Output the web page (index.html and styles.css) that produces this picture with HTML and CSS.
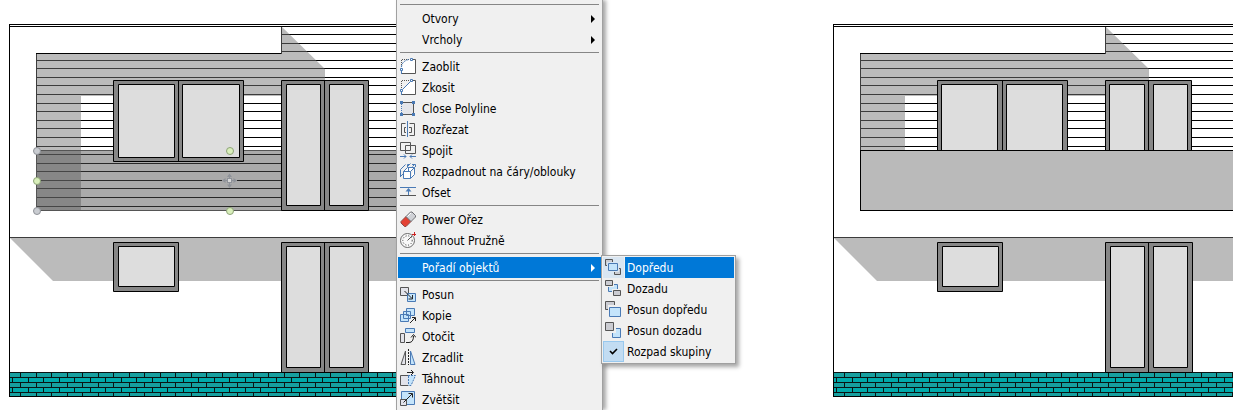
FILE: index.html
```html
<!DOCTYPE html>
<html lang="cs">
<head>
<meta charset="utf-8">
<title>Pořadí objektů</title>
<link rel="stylesheet" href="styles.css">
</head>
<body>
<svg class="defs" aria-hidden="true">
  <defs>
    <pattern id="bricks" x="20" y="372" width="31" height="10" patternUnits="userSpaceOnUse">
      <rect width="31" height="5" fill="#17a0a0"/>
      <rect y="5" width="31" height="5" fill="#00aaaa"/>
      <path d="M0 .5H31M0 5.5H31M.5 0V5M16.5 0V5M8.5 5V10M23.5 5V10" stroke="#0a1414" fill="none"/>
    </pattern>
    <g id="facade">
      <path class="ink" d="M440 24.5H9.5V396.5M9 26.5H440"/>
      <path class="ink" d="M36.5 210V53.5H281.5V26"/>
      <path class="ink" d="M282 34.5H440M282 43.5H440M282 51.5H440M36 60.5H440M36 68.5H440M36 77.5H440M36 85.5H440M36 94.5H440M36 103.5H440M36 111.5H440M36 120.5H440M36 128.5H440M36 137.5H440M36 146.5H440M36 154.5H440M36 163.5H440M36 171.5H440M36 180.5H440M36 188.5H440M36 197.5H440M36 206.5H440M9 237.5H440"/>
      <path class="shade" d="M36 54H281V27H282L325 69V96H81V210H36Z"/>
      <path class="shade" d="M10 237H440V281H53L10 238Z"/>
      <rect x="10" y="372" width="430" height="24" fill="url(#bricks)"/>
      <path class="ink" d="M9 396.5H440"/>
    </g>
    <g id="ground-doors">
      <path class="frame" d="M281.5 242.5H368.5V372.5H281.5ZM324.5 242V372"/>
      <path class="pane" d="M286.5 246.5H320.5V367.5H286.5ZM329.5 246.5H363.5V367.5H329.5Z"/>
    </g>
    <g id="small-window">
      <path class="frame" d="M113.5 242.5H178.5V291.5H113.5Z"/>
      <path class="pane" d="M118.5 246.5H174.5V286.5H118.5Z"/>
    </g>
  </defs>
</svg>

<main class="stage">
  <svg class="drawing" role="img" aria-label="Fasáda s vybraným objektem">
    <use href="#facade"/>
    <rect class="selection" x="36" y="150" width="404" height="61"/>
    <path class="selection-edge" d="M440 150.5H36.5V210.5H440"/>
    <path class="frame" d="M113.5 80.5H243.5V161.5H113.5ZM178.5 80V161"/>
    <path class="pane" d="M118.5 84.5H174.5V157.5H118.5ZM182.5 84.5H239.5V157.5H182.5Z"/>
    <path class="frame" d="M281.5 80.5H368.5V210.5H281.5ZM324.5 80V210"/>
    <path class="pane" d="M286.5 84.5H320.5V205.5H286.5ZM329.5 84.5H363.5V205.5H329.5Z"/>
    <use href="#small-window"/>
    <use href="#ground-doors"/>
    <g class="handle-gray"><circle cx="37" cy="151" r="3.5"/><circle cx="37" cy="211" r="3.5"/></g>
    <g class="handle-green"><circle cx="37" cy="181" r="3.5"/><circle cx="230" cy="151" r="3.5"/><circle cx="230" cy="211" r="3.5"/></g>
    <g class="mover">
      <path d="M222 180.5H237" stroke="#aaa" stroke-width="3"/>
      <path d="M223 180.5H236M229.5 175V187" stroke="#8e9299"/>
      <path d="M229.5 173.500L232 177H227ZM229.500 188L232 184.500H227ZM222 180.500L225.500 178V183ZM237 180.500L233.500 178V183Z" fill="#8e9299"/>
      <rect x="227.500" y="178.500" width="4" height="4" fill="#d8d8d8" stroke="#8e9299"/>
    </g>
  </svg>

  <div class="menu" role="menu">
    <hr>
    <button class="item" role="menuitem"><span class="icon"></span>Otvory<svg class="arrow" viewBox="0 0 4 8"><path d="M0 0L4 4L0 8Z"/></svg></button>
    <button class="item" role="menuitem"><span class="icon"></span>Vrcholy<svg class="arrow" viewBox="0 0 4 8"><path d="M0 0L4 4L0 8Z"/></svg></button>
    <hr>
    <button class="item" role="menuitem"><svg class="icon" viewBox="0 0 16 17"><path d="M1.500 11V15.500H15.500V1.500H11Q1.500 2 1.500 11" fill="#fff"/><path class="d" d="M2 15.500H15.500V1.500H13"/><path class="d dot" d="M1.500 9V1.500H10"/><path class="b" d="M1.500 9Q2 3 9 1.500" stroke-dasharray="2 1"/><path class="b" d="M1.500 13V16"/><path class="sq" d="M.5 10.500h2v2h-2ZM10.500 .5h2v2h-2Z"/></svg>Zaoblit</button>
    <button class="item" role="menuitem"><svg class="icon" viewBox="0 0 16 17"><path d="M1.500 11V15.500H15.500V1.500H11Z" fill="#fff"/><path class="d" d="M2 15.500H15.500V1.500H13"/><path class="d dot" d="M1.500 9V1.500H10"/><path class="b" d="M2.500 10.500L10.500 2.500M1.500 13V16"/><path class="sq" d="M.5 10.500h2v2h-2ZM10.500 .5h2v2h-2Z"/></svg>Zkosit</button>
    <button class="item" role="menuitem"><svg class="icon" viewBox="0 0 16 17"><path d="M1.500 2.500H13.500V14.500H1.500Z" fill="#e4e5e9"/><path class="d" d="M2 2.500H13.500V14.500H2"/><path class="b dot" d="M1.500 4V13"/><path d="M0 1h3v3H0ZM12 1h3v3h-3ZM0 13h3v3H0ZM12 13h3v3h-3Z" fill="#4a7ab5"/></svg>Close Polyline</button>
    <button class="item" role="menuitem"><svg class="icon" viewBox="0 0 16 17"><path class="d" d="M5.500 2.500H1.500V14.500H5.500M9.500 2.500H14.500V14.500H9.500M6 6.500H4.500V11.500H6M9 6.500H11.500V11.500H9"/><path class="b" d="M7.500 0V16"/></svg>Rozřezat</button>
    <button class="item" role="menuitem"><svg class="icon" viewBox="0 0 16 17"><path class="d" d="M.5 .5H10.500V8.500H.5ZM5.500 3.500H15.500V11.500H5.500Z"/><path class="b" d="M0 14.500H6M10 14.500H16M4 12.500L6 14.500L4 16.500M12 12.500L10 14.500L12 16.500"/></svg>Spojit</button>
    <button class="item" role="menuitem"><svg class="icon" viewBox="0 0 16 17"><path class="b" fill="#fff" d="M3.500 8.500H10.500V15.500H3.500ZM3.500 8.500L7.500 4.500H14.500L10.500 8.500M14.500 4.500V11.500L10.500 15.500"/><path class="b" d="M.5 14V6.500L5.500 1.500M.5 13.500L3 11M7.500 4V1.500H9.500M12 1.500H15.500V4M7.500 3.500L10.500 .5M8.500 5V8M12.500 3.500L15 1"/></svg>Rozpadnout na čáry/oblouky</button>
    <button class="item" role="menuitem"><svg class="icon" viewBox="0 0 16 17"><path class="b" d="M0 3.500H16M8.500 5V11"/><path d="M8.500 4L11.500 7.500H5.500Z" fill="#4a7ab5"/><path class="d" d="M0 11.500H16"/></svg>Ofset</button>
    <hr>
    <button class="item" role="menuitem"><svg class="icon" viewBox="0 0 16 17"><path d="M1 10.500L6 5.500L11 10.500L6 15.500H4.500L1 12Z" fill="#e34234" stroke="#8b4a45"/><path d="M6 5.500L10.500 1H12L15.500 4.500V6L11 10.500Z" fill="#cfd1d6" stroke="#707075"/><path d="M7.500 5.500L11 2" stroke="#fff"/></svg>Power Ořez</button>
    <button class="item" role="menuitem"><svg class="icon" viewBox="0 0 16 17"><circle cx="7.500" cy="8.500" r="7" fill="#f8f8f8" stroke="#6a6a6a"/><circle cx="7.500" cy="8.500" r="4.700" fill="none" stroke="#333" stroke-dasharray="1 1.800"/><path class="d" d="M7.500 8.500L12 4"/><path d="M12 2.500H16M14.500 0V4" stroke="#c22"/></svg>Táhnout Pružně</button>
    <hr>
    <div class="branch">
      <button class="item active" role="menuitem" aria-haspopup="true" aria-expanded="true"><span class="icon"></span>Pořadí objektů<svg class="arrow" viewBox="0 0 4 8"><path d="M0 0L4 4L0 8Z"/></svg></button>
      <div class="menu submenu" role="menu">
        <button class="sub current" role="menuitem"><span class="cell"><svg class="icon" viewBox="0 0 16 17"><path class="g" d="M.5 .5H7.500V6.500H.5ZM9.500 9.500H15.500V15.500H9.500Z"/><path d="M2 3H14V13H2Z" fill="#d9e6f2"/><path class="l" d="M3.500 4.500H12.500V11.500H3.500Z"/></svg></span><span class="label">Dopředu</span></button>
        <button class="sub" role="menuitem"><span class="cell"><svg class="icon" viewBox="0 0 16 17"><path class="l" d="M3.500 4.500H12.500V11.500H3.500Z"/><path d="M0 0H9V7H0ZM7 9H16V16H7Z" fill="#f0f0f0"/><path class="g" d="M.5 .5H7.500V5.500H.5ZM8.500 10.500H15.500V15.500H8.500Z"/></svg></span><span class="label">Dozadu</span></button>
        <button class="sub" role="menuitem"><span class="cell"><svg class="icon" viewBox="0 0 16 17"><path class="g" d="M.5 .5H9.500V8.500H.5Z"/><path d="M3 4H12V10H3Z" fill="#f0f0f0"/><path class="l" d="M4.500 6.500H15.500V15.500H4.500Z"/></svg></span><span class="label">Posun dopředu</span></button>
        <button class="sub" role="menuitem"><span class="cell"><svg class="icon" viewBox="0 0 16 17"><path class="l" d="M7.500 6.500H15.500V15.500H7.500Z"/><path d="M6 5H11V11H6Z" fill="#f0f0f0"/><path class="g" d="M.5 .5H8.500V8.500H.5Z"/></svg></span><span class="label">Posun dozadu</span></button>
        <button class="sub checked" role="menuitemcheckbox" aria-checked="true"><span class="cell"><svg class="icon" viewBox="0 0 16 17"><path d="M5 8L7.500 10.500L12 6" fill="none" stroke="#000" stroke-width="1.600"/></svg></span><span class="label">Rozpad skupiny</span></button>
      </div>
    </div>
    <hr>
    <button class="item" role="menuitem"><svg class="icon" viewBox="0 0 16 17"><path d="M.5 1.500H8.500V9.500H.5Z" fill="#e2e3ea" stroke="#555"/><path class="l" d="M7.500 7.500H15.500V15.500H7.500Z"/><path d="M4.500 5L12 12.500M12.500 9V13H8.500" stroke="#222" fill="none"/></svg>Posun</button>
    <button class="item" role="menuitem"><svg class="icon" viewBox="0 0 16 17"><path class="l" d="M.5 7.500H8.500V14.500H.5ZM3.500 4.500H10.500V11.500H3.500ZM6.500 1.500H14.500V8.500H6.500Z"/><path d="M10 16L15 11M12 10.500H15.500V14" stroke="#222" fill="none"/></svg>Kopie</button>
    <button class="item" role="menuitem"><svg class="icon" viewBox="0 0 16 17"><path class="l" d="M5.500 .5H14.500V4.500H5.500Z"/><path d="M.5 5.500H4.500V14.500H.5Z" fill="#e2e3ea" stroke="#555"/><path d="M6 14.500H9Q13.500 14.500 13.500 8M11 9.500L13.500 6.500L16 9.500" stroke="#222" fill="none"/></svg>Otočit</button>
    <button class="item" role="menuitem"><svg class="icon" viewBox="0 0 16 17"><path d="M1 15.500L5.500 2V15.500Z" fill="#e2e3ea" stroke="#555"/><path d="M8.500 0V16" stroke="#222" stroke-dasharray="2 1"/><path class="l" d="M15 15.500L10.500 2V15.500Z"/></svg>Zrcadlit</button>
    <button class="item" role="menuitem"><svg class="icon" viewBox="0 0 16 17"><path d="M.5 5.500H8.500V15.500H.5Z" fill="#e2e3ea" stroke="#555"/><path d="M8 5.500H15.500L11 15.500H8Z" fill="#c4e4fb"/><path class="b" d="M8 5.500H15.500L11 15.500H9M8.500 6V15" stroke-dasharray="2 1"/><path d="M7 2.500H13M11 0L13.500 2.500L11 5" stroke="#222" fill="none"/></svg>Táhnout</button>
    <button class="item" role="menuitem"><svg class="icon" viewBox="0 0 16 17"><path class="l" d="M1.500 .5H14.500V13.500H1.500Z"/><path d="M.5 8.500H6.500V14.500H.5Z" fill="#e2e3ea" stroke="#555"/><path d="M3.500 11.500L12 3M8.500 2.500H12.500V6.500" stroke="#222" fill="none"/></svg>Zvětšit</button>
  </div>

  <svg class="drawing" role="img" aria-label="Fasáda po změně pořadí">
    <g transform="translate(221 0)">
      <use href="#facade"/>
      <path class="frame" d="M113.5 80.5H243.5V161.5H113.5ZM178.5 80V161"/>
      <path class="pane" d="M117.5 84.5H173.5V157.5H117.5ZM182.5 84.5H238.5V157.5H182.5Z"/>
      <path class="frame" d="M281.5 80.5H367.5V210.5H281.5ZM324.5 80V210"/>
      <path class="pane" d="M285.5 84.5H320.5V205.5H285.5ZM329.5 84.5H363.5V205.5H329.5Z"/>
      <rect class="balcony" x="36.5" y="150.5" width="410" height="60"/>
      <use href="#small-window"/>
      <use href="#ground-doors"/>
    </g>
  </svg>
</main>
</body>
</html>
```
FILE: styles.css
```css
body {
  margin: 0;
  background: #fff;
  color: #000;
  font-family: "DejaVu Sans Condensed", "DejaVu Sans", sans-serif;
  font-size: 12px;
}

.defs {
  position: absolute;
  width: 0;
  height: 0;
}

.stage {
  display: grid;
  grid-template-columns: 396fr 207px 630fr;
  overflow: hidden;
}

.drawing {
  display: block;
  width: 100%;
  height: 100%;
  overflow: hidden;
}

.ink { fill: none; stroke: #000; shape-rendering: crispEdges; }
.shade { fill: #787878; fill-opacity: .5; }
.frame { fill: #868686; stroke: #000; }
.pane { fill: #ddd; stroke: #000; }
.balcony { fill: #bababa; stroke: #000; }
.selection { fill: #525252; fill-opacity: .49; }
.selection-edge { fill: none; stroke: #555; }
.handle-gray { fill: #c9ccd1; stroke: #8f9298; }
.handle-green { fill: #d9efbb; stroke: #8da377; }

.menu {
  position: relative;
  z-index: 1;
  box-sizing: border-box;
  padding: 2px 1px 0;
  border: solid #a0a0a0;
  border-width: 0 1px;
  background: #f0f0f0;
  box-shadow: 3px 0 4px rgba(0, 0, 0, .35);
}

.menu hr {
  height: 1px;
  margin: 2px 2px 3px;
  border: 0;
  background: #868686;
}

.item,
.sub {
  display: flex;
  align-items: flex-start;
  box-sizing: border-box;
  width: 100%;
  height: 21px;
  padding: 0;
  border: 0;
  background: none;
  color: inherit;
  font: inherit;
  line-height: 21px;
  text-align: left;
  white-space: nowrap;
}

.item {
  gap: 6px;
  padding: 1px 6px 0 2px;
}

.item .icon { margin-top: 1px; }

.active,
.current .label {
  background: #0078d7;
  color: #fff;
}

.icon {
  flex: none;
  width: 16px;
  height: 17px;
}

.arrow {
  width: 4px;
  height: 8px;
  margin-top: 6px;
  margin-left: auto;
  fill: currentColor;
}

.branch { position: relative; }

.submenu {
  position: absolute;
  top: -2px;
  left: 203px;
  width: 135px;
  padding: 1px;
  border-width: 1px;
  box-shadow: 3px 3px 4px rgba(0, 0, 0, .35);
}

.sub { gap: 1px; }

.cell {
  display: flex;
  flex: none;
  align-items: center;
  box-sizing: border-box;
  width: 21px;
  height: 21px;
  padding-left: 2px;
}

.label {
  flex: 1;
  box-sizing: border-box;
  height: 21px;
  padding: 1px 0 0 2px;
}

.current .cell { background: #d9e6f2; }

.checked .cell {
  padding-left: 1px;
  border: 1px solid #98c8ee;
  background: #c2dcf2;
}

.d { fill: none; stroke: #555; }
.b { stroke: #4a7ab5; }
.b:not([fill]) { fill: none; }
.dot { stroke-dasharray: 1 1; }
.sq { fill: #fff; stroke: #4a7ab5; }
.g { fill: #cbccd2; stroke: #555; }
.l { fill: #c4e4fb; stroke: #4a7ab5; }
```
